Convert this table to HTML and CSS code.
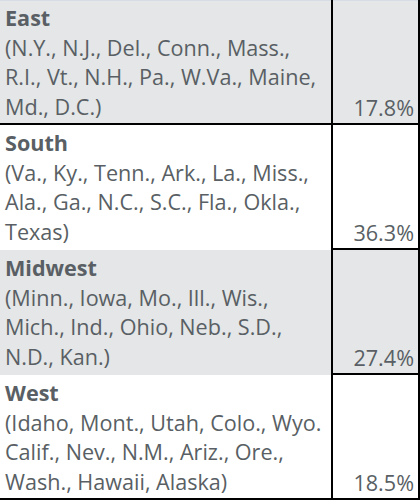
FILE: index.html
```html
<!DOCTYPE html>
<html lang="en">
<head>
<meta charset="utf-8">
<title>Regions</title>
<link rel="stylesheet" href="styles.css">
</head>
<body>
<div class="table">
  <div class="row shaded ruled first">
    <div class="region">
      <span class="name">East</span>
      <span>(N.Y., N.J., Del., Conn., Mass.,</span>
      <span>R.I., Vt., N.H., Pa., W.Va., Maine,</span>
      <span>Md., D.C.)</span>
    </div>
    <div class="share">17.8%</div>
  </div>
  <div class="row">
    <div class="region">
      <span class="name">South</span>
      <span>(Va., Ky., Tenn., Ark., La., Miss.,</span>
      <span>Ala., Ga., N.C., S.C., Fla., Okla.,</span>
      <span>Texas)</span>
    </div>
    <div class="share">36.3%</div>
  </div>
  <div class="row shaded">
    <div class="region">
      <span class="name">Midwest</span>
      <span>(Minn., Iowa, Mo., Ill., Wis.,</span>
      <span>Mich., Ind., Ohio, Neb., S.D.,</span>
      <span>N.D., Kan.)</span>
    </div>
    <div class="share">27.4%</div>
  </div>
  <div class="row ruled">
    <div class="region">
      <span class="name">West</span>
      <span>(Idaho, Mont., Utah, Colo., Wyo.</span>
      <span>Calif., Nev., N.M., Ariz., Ore.,</span>
      <span>Wash., Hawaii, Alaska)</span>
    </div>
    <div class="share">18.5%</div>
  </div>
</div>
</body>
</html>
```

FILE: styles.css
```css
html, body {
  margin: 0;
  padding: 0;
  background: #ffffff;
}

body {
  font-family: "Open Sans", "Liberation Sans", sans-serif;
  font-size: 21.6px;
  line-height: 29.5px;
  color: #595f64;
}

.table {
  width: 420px;
}

.row {
  display: flex;
  height: 125px;
}

.shaded {
  background: #e4e6e7;
}

.first {
  box-shadow: inset 0 1px 0 #d6dde4;
}

.region {
  width: 326px;
  padding-left: 5px;
  padding-top: 3px;
  border-right: 2px solid #000;
  display: flex;
  flex-direction: column;
}

.region span {
  white-space: nowrap;
}

.region .name {
  font-weight: 700;
}

.ruled .region {
  border-bottom: 2px solid #000;
}

.share {
  width: 81px;
  padding-right: 4px;
  padding-bottom: 1px;
  border-right: 2px solid #000;
  border-bottom: 2px solid #000;
  display: flex;
  align-items: flex-end;
  justify-content: flex-end;
}
```
